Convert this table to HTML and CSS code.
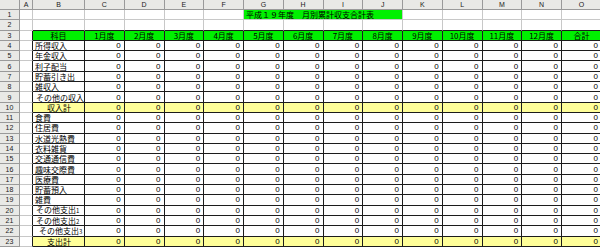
FILE: index.html
```html
<!DOCTYPE html>
<html lang="ja">
<head>
<meta charset="utf-8">
<title>平成19年度 月別累計収支合計表</title>
<link rel="stylesheet" href="styles.css">
</head>
<body>
<table class="sheet">
<colgroup>
<col class="c-rh"><col class="c-a"><col class="c-b">
<col class="c-m"><col class="c-m"><col class="c-m"><col class="c-m"><col class="c-m"><col class="c-m">
<col class="c-m"><col class="c-m"><col class="c-m"><col class="c-m"><col class="c-m"><col class="c-m">
<col class="c-o">
</colgroup>
<tr class="hdr">
<th class="corner"></th><th class="col">A</th><th class="col">B</th><th class="col">C</th><th class="col">D</th><th class="col">E</th><th class="col">F</th><th class="col">G</th><th class="col">H</th><th class="col">I</th><th class="col">J</th><th class="col">K</th><th class="col">L</th><th class="col">M</th><th class="col">N</th><th class="col">O</th>
</tr>
<tr>
<th class="row">1</th><td></td><td></td><td></td><td></td><td></td><td></td><td class="title" colspan="4">平成１９年度　月別累計収支合計表</td><td></td><td></td><td></td><td></td><td></td>
</tr>
<tr>
<th class="row">2</th><td></td><td class="tb"></td><td class="tb"></td><td class="tb"></td><td class="tb"></td><td class="tb"></td><td class="tb"></td><td class="tb"></td><td class="tb"></td><td class="tb"></td><td class="tb"></td><td class="tb"></td><td class="tb"></td><td class="tb"></td><td class="tb"></td>
</tr>
<tr>
<th class="row">3</th><td class="lb"></td><td class="b g h">科目</td><td class="b g h">1月度</td><td class="b g h">2月度</td><td class="b g h">3月度</td><td class="b g h">4月度</td><td class="b g h">5月度</td><td class="b g h">6月度</td><td class="b g h">7月度</td><td class="b g h">8月度</td><td class="b g h">9月度</td><td class="b g h">10月度</td><td class="b g h">11月度</td><td class="b g h">12月度</td><td class="b g h">合計</td>
</tr>
<tr>
<th class="row">4</th><td class="lb"></td><td class="b lab">所得収入</td><td class="b n">0</td><td class="b n">0</td><td class="b n">0</td><td class="b n">0</td><td class="b n">0</td><td class="b n">0</td><td class="b n">0</td><td class="b n">0</td><td class="b n">0</td><td class="b n">0</td><td class="b n">0</td><td class="b n">0</td><td class="b n">0</td>
</tr>
<tr>
<th class="row">5</th><td class="lb"></td><td class="b lab">年金収入</td><td class="b n">0</td><td class="b n">0</td><td class="b n">0</td><td class="b n">0</td><td class="b n">0</td><td class="b n">0</td><td class="b n">0</td><td class="b n">0</td><td class="b n">0</td><td class="b n">0</td><td class="b n">0</td><td class="b n">0</td><td class="b n">0</td>
</tr>
<tr>
<th class="row">6</th><td class="lb"></td><td class="b lab">利子配当</td><td class="b n">0</td><td class="b n">0</td><td class="b n">0</td><td class="b n">0</td><td class="b n">0</td><td class="b n">0</td><td class="b n">0</td><td class="b n">0</td><td class="b n">0</td><td class="b n">0</td><td class="b n">0</td><td class="b n">0</td><td class="b n">0</td>
</tr>
<tr>
<th class="row">7</th><td class="lb"></td><td class="b lab">貯蓄引き出</td><td class="b n">0</td><td class="b n">0</td><td class="b n">0</td><td class="b n">0</td><td class="b n">0</td><td class="b n">0</td><td class="b n">0</td><td class="b n">0</td><td class="b n">0</td><td class="b n">0</td><td class="b n">0</td><td class="b n">0</td><td class="b n">0</td>
</tr>
<tr>
<th class="row">8</th><td class="lb"></td><td class="b lab">雑収入</td><td class="b n">0</td><td class="b n">0</td><td class="b n">0</td><td class="b n">0</td><td class="b n">0</td><td class="b n">0</td><td class="b n">0</td><td class="b n">0</td><td class="b n">0</td><td class="b n">0</td><td class="b n">0</td><td class="b n">0</td><td class="b n">0</td>
</tr>
<tr>
<th class="row">9</th><td class="lb"></td><td class="b lab ind1">その他の収入</td><td class="b n">0</td><td class="b n">0</td><td class="b n">0</td><td class="b n">0</td><td class="b n">0</td><td class="b n">0</td><td class="b n">0</td><td class="b n">0</td><td class="b n">0</td><td class="b n">0</td><td class="b n">0</td><td class="b n">0</td><td class="b n">0</td>
</tr>
<tr>
<th class="row">10</th><td class="lb"></td><td class="b y lab tot">収入計</td><td class="b y n">0</td><td class="b y n">0</td><td class="b y n">0</td><td class="b y n">0</td><td class="b y n">0</td><td class="b y n">0</td><td class="b y n">0</td><td class="b y n">0</td><td class="b y n">0</td><td class="b y n">0</td><td class="b y n">0</td><td class="b y n">0</td><td class="b y n">0</td>
</tr>
<tr>
<th class="row">11</th><td class="lb"></td><td class="b lab">食費</td><td class="b n">0</td><td class="b n">0</td><td class="b n">0</td><td class="b n">0</td><td class="b n">0</td><td class="b n">0</td><td class="b n">0</td><td class="b n">0</td><td class="b n">0</td><td class="b n">0</td><td class="b n">0</td><td class="b n">0</td><td class="b n">0</td>
</tr>
<tr>
<th class="row">12</th><td class="lb"></td><td class="b lab">住居費</td><td class="b n">0</td><td class="b n">0</td><td class="b n">0</td><td class="b n">0</td><td class="b n">0</td><td class="b n">0</td><td class="b n">0</td><td class="b n">0</td><td class="b n">0</td><td class="b n">0</td><td class="b n">0</td><td class="b n">0</td><td class="b n">0</td>
</tr>
<tr>
<th class="row">13</th><td class="lb"></td><td class="b lab">水道光熱費</td><td class="b n">0</td><td class="b n">0</td><td class="b n">0</td><td class="b n">0</td><td class="b n">0</td><td class="b n">0</td><td class="b n">0</td><td class="b n">0</td><td class="b n">0</td><td class="b n">0</td><td class="b n">0</td><td class="b n">0</td><td class="b n">0</td>
</tr>
<tr>
<th class="row">14</th><td class="lb"></td><td class="b lab">衣料雑貨</td><td class="b n">0</td><td class="b n">0</td><td class="b n">0</td><td class="b n">0</td><td class="b n">0</td><td class="b n">0</td><td class="b n">0</td><td class="b n">0</td><td class="b n">0</td><td class="b n">0</td><td class="b n">0</td><td class="b n">0</td><td class="b n">0</td>
</tr>
<tr>
<th class="row">15</th><td class="lb"></td><td class="b lab">交通通信費</td><td class="b n">0</td><td class="b n">0</td><td class="b n">0</td><td class="b n">0</td><td class="b n">0</td><td class="b n">0</td><td class="b n">0</td><td class="b n">0</td><td class="b n">0</td><td class="b n">0</td><td class="b n">0</td><td class="b n">0</td><td class="b n">0</td>
</tr>
<tr>
<th class="row">16</th><td class="lb"></td><td class="b lab">趣味交際費</td><td class="b n">0</td><td class="b n">0</td><td class="b n">0</td><td class="b n">0</td><td class="b n">0</td><td class="b n">0</td><td class="b n">0</td><td class="b n">0</td><td class="b n">0</td><td class="b n">0</td><td class="b n">0</td><td class="b n">0</td><td class="b n">0</td>
</tr>
<tr>
<th class="row">17</th><td class="lb"></td><td class="b lab">医療費</td><td class="b n">0</td><td class="b n">0</td><td class="b n">0</td><td class="b n">0</td><td class="b n">0</td><td class="b n">0</td><td class="b n">0</td><td class="b n">0</td><td class="b n">0</td><td class="b n">0</td><td class="b n">0</td><td class="b n">0</td><td class="b n">0</td>
</tr>
<tr>
<th class="row">18</th><td class="lb"></td><td class="b lab">貯蓄預入</td><td class="b n">0</td><td class="b n">0</td><td class="b n">0</td><td class="b n">0</td><td class="b n">0</td><td class="b n">0</td><td class="b n">0</td><td class="b n">0</td><td class="b n">0</td><td class="b n">0</td><td class="b n">0</td><td class="b n">0</td><td class="b n">0</td>
</tr>
<tr>
<th class="row">19</th><td class="lb"></td><td class="b lab">雑費</td><td class="b n">0</td><td class="b n">0</td><td class="b n">0</td><td class="b n">0</td><td class="b n">0</td><td class="b n">0</td><td class="b n">0</td><td class="b n">0</td><td class="b n">0</td><td class="b n">0</td><td class="b n">0</td><td class="b n">0</td><td class="b n">0</td>
</tr>
<tr>
<th class="row">20</th><td class="lb"></td><td class="b lab ind1">その他支出<span class="sm">1</span></td><td class="b n">0</td><td class="b n">0</td><td class="b n">0</td><td class="b n">0</td><td class="b n">0</td><td class="b n">0</td><td class="b n">0</td><td class="b n">0</td><td class="b n">0</td><td class="b n">0</td><td class="b n">0</td><td class="b n">0</td><td class="b n">0</td>
</tr>
<tr>
<th class="row">21</th><td class="lb"></td><td class="b lab ind1">その他支出<span class="sm">2</span></td><td class="b n">0</td><td class="b n">0</td><td class="b n">0</td><td class="b n">0</td><td class="b n">0</td><td class="b n">0</td><td class="b n">0</td><td class="b n">0</td><td class="b n">0</td><td class="b n">0</td><td class="b n">0</td><td class="b n">0</td><td class="b n">0</td>
</tr>
<tr>
<th class="row">22</th><td class="lb"></td><td class="b lab ind2">その他支出<span class="sm">3</span></td><td class="b n">0</td><td class="b n">0</td><td class="b n">0</td><td class="b n">0</td><td class="b n">0</td><td class="b n">0</td><td class="b n">0</td><td class="b n">0</td><td class="b n">0</td><td class="b n">0</td><td class="b n">0</td><td class="b n">0</td><td class="b n">0</td>
</tr>
<tr>
<th class="row">23</th><td class="lb"></td><td class="b y lab tot">支出計</td><td class="b y n">0</td><td class="b y n">0</td><td class="b y n">0</td><td class="b y n">0</td><td class="b y n">0</td><td class="b y n">0</td><td class="b y n">0</td><td class="b y n">0</td><td class="b y n">0</td><td class="b y n">0</td><td class="b y n">0</td><td class="b y n">0</td><td class="b y n">0</td>
</tr>
</table>
</body>
</html>
```
FILE: styles.css
```css
html, body {
  margin: 0;
  padding: 0;
  background: #ffffff;
  overflow: hidden;
}

.sheet {
  border-collapse: separate;
  border-spacing: 0;
  table-layout: fixed;
  width: 602px;
  font-family: "Noto Sans CJK JP", "Liberation Sans", sans-serif;
  font-size: 8px;
  color: #000;
}

.c-rh { width: 20px; }
.c-a { width: 13px; }
.c-b { width: 52px; }
.c-m { width: 39.75px; }
.c-o { width: 40px; }

.sheet tr { height: 10.3px; }
.sheet tr.hdr { height: 10px; }

.sheet td,
.sheet th {
  padding: 0;
  line-height: 7px;
  white-space: nowrap;
  overflow: hidden;
  border-right: 1px solid #c8c8c8;
  border-bottom: 1px solid #c8c8c8;
  vertical-align: middle;
}

.sheet th {
  background: #e9e9e6;
  font-family: "Liberation Sans", Arial, sans-serif;
  font-weight: normal;
  font-size: 7px;
  color: #222;
  text-align: center;
  border-right: 1px solid #9a9a9a;
  border-bottom: 1px solid #9a9a9a;
}

.sheet th.corner { background: #e9e9e6; }

.sheet td.b {
  border-right: 1px solid #1c1c1c;
  border-bottom: 1px solid #1c1c1c;
}
.sheet td.lb { border-right: 1px solid #1c1c1c; }
.sheet td.tb { border-bottom: 1px solid #1c1c1c; }

.g { background: #00f000; }
.y { background: #ffff99; }

.h { text-align: center; }

.sheet td.n {
  text-align: right;
  padding-right: 3px;
  font-family: "Liberation Sans", Arial, sans-serif;
  font-size: 8px;
}

.sheet td.lab { padding-left: 2px; }
.sheet td.ind1 { padding-left: 3px; }
.sheet td.ind2 { padding-left: 6px; }
.sheet td.tot { padding-left: 14px; }

.sm { font-size: 6px; line-height: 6px; }

.sheet td.title {
  background: #00f000;
  padding-left: 2px;
  text-align: left;
}
```
